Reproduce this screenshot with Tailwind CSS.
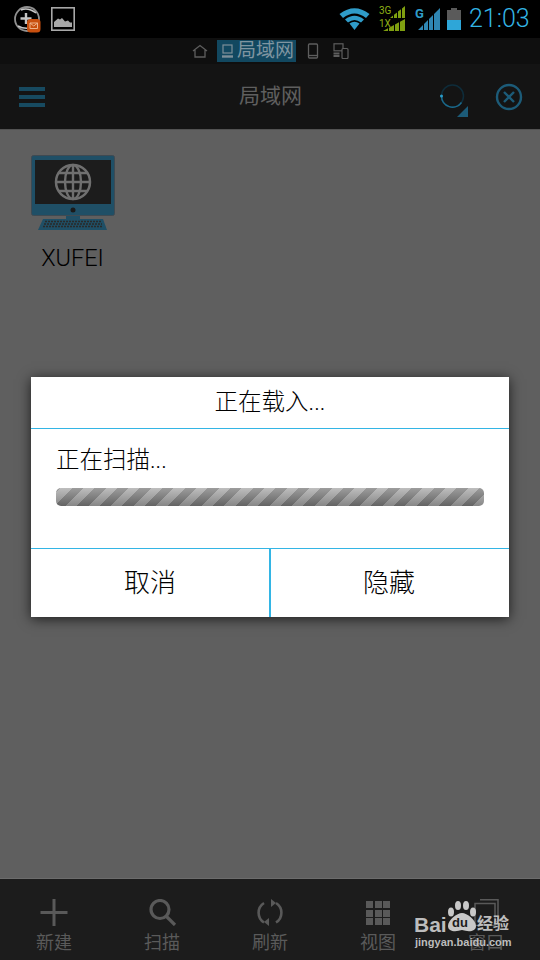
<!DOCTYPE html>
<html><head><meta charset="utf-8">
<script src="https://cdn.jsdelivr.net/npm/@tailwindcss/browser@4"></script></head>
<body class="m-0">
<div class="relative w-[540px] h-[960px] overflow-hidden bg-[#5f5f5f] flex flex-col font-['Roboto','Noto_Sans_CJK_SC',sans-serif]">
  <!-- status bar -->
  <div class="h-[38px] bg-black flex items-center pl-[14px] pr-[10px] shrink-0">
    <svg width="27" height="27" viewBox="0 0 27 27">
      <circle cx="13" cy="13" r="12" fill="none" stroke="#8f8f8f" stroke-width="1.800"/>
      <path d="M4 20Q11 24 20 21M7 4Q14 1 22 7" fill="none" stroke="#c8c8c8" stroke-width="1.500"/>
      <path d="M12 7v11M6.500 12.500h11" stroke="#c4c4c4" stroke-width="2.400"/>
      <rect x="13" y="13" width="13.500" height="13.500" rx="3.500" fill="#c9500f"/>
      <path d="M16 17h7.500v5.500H16zM16 17l3.750 3 3.750-3" fill="none" stroke="#eeb48c" stroke-width="1"/>
    </svg>
    <svg width="24" height="24" viewBox="0 0 24 24" class="ml-[10px]">
      <rect x="0.800" y="0.800" width="22.400" height="22.400" fill="none" stroke="#a8a8a8" stroke-width="1.600"/>
      <path d="M3 20v-5l4-3.500 2 1 2-1.500 3 3.500 3-1 2 2 2 0v4.500z" fill="#a8a8a8"/>
    </svg>
    <div class="flex-1"></div>
    <svg width="31" height="24" viewBox="0 0 31 24" class="mr-[9px]">
      <path d="M0.500 7Q15.500 -4.500 30.500 7L27 11Q15.500 2 4 11z" fill="#2f9cc9"/>
      <path d="M6 12.500Q15.500 5 25 12.500L22 15.500Q15.500 10.500 9 15.500z" fill="#2f9cc9"/>
      <path d="M10.500 16.500Q15.500 13 20.500 16.500L15.500 23z" fill="#2f9cc9"/>
    </svg>
    <div class="relative w-[26px] h-[25px] mt-[-1px] mr-[10px]">
      <svg width="26" height="25" viewBox="0 0 26 25" class="absolute inset-0">
        <path d="M11 12l3-2.400V12zM15 12V8.800l3-2.400V12zM19 12V5.600l3-2.400V12zM23 12V2.400L26 0v12z" fill="#7f9f10"/>
        <path d="M4 25l5-2.700V25zM10 25v-3.200l5-2.700V25zM16 25v-6.500l4-2.200V25zM21 25v-9.300l5-2.700V25z" fill="#7f9f10"/>
      </svg>
      <span class="absolute left-0 top-0 text-[10px] leading-[10px] text-[#8fb015]">3G</span>
      <span class="absolute left-0 top-[13px] text-[10px] leading-[10px] text-[#8fb015]">1X</span>
    </div>
    <div class="relative w-[26px] h-[23px] mr-[6px]">
      <svg width="26" height="23" viewBox="0 0 26 23" class="absolute inset-0">
        <path d="M3 22l5-5v5zM9 22v-6l4-4v10zM14 22V11l4-4v15zM19 22V6l6-6v22z" fill="#2f86b3"/>
      </svg>
      <span class="absolute left-0 top-0 text-[13px] leading-[12px] font-bold text-[#2f9cc9]">G</span>
    </div>
    <div class="w-[14px] h-[22px] flex flex-col items-center mr-[8px]">
      <div class="w-[6px] h-[2px] bg-[#5a5a5a]"></div>
      <div class="w-[14px] h-[10px] bg-[#5a5a5a]"></div>
      <div class="w-[14px] h-[10px] bg-[#2ea6d8]"></div>
    </div>
    <span class="text-[25px] leading-[30px] font-light text-[#33b5e5] font-['Roboto'] w-[61px] whitespace-nowrap">21:03</span>
  </div>
  <!-- location tabs -->
  <div class="h-[26px] bg-[#0f0f0f] flex items-center pl-[192px] shrink-0">
    <svg width="16" height="14" viewBox="0 0 16 14" fill="none" stroke="#5e5e5e" stroke-width="1.300" class="mr-[9px]">
      <path d="M1 7l7-5.500L15 7M3 6v7h10V6"/>
    </svg>
    <div class="h-[22px] w-[79px] bg-[#124860] flex items-center pl-[5px] gap-[4px]">
      <svg width="11" height="14" viewBox="0 0 11 14" fill="none" stroke="#7d8f98" stroke-width="1.200">
        <rect x="1" y="1" width="9" height="8"/><path d="M0 12.500h11" stroke-width="2.400"/>
      </svg>
      <span class="text-[19px] leading-[22px] text-[#7f95a0] whitespace-nowrap">局域网</span>
    </div>
    <svg width="12" height="16" viewBox="0 0 12 16" fill="none" stroke="#5e5e5e" stroke-width="1.300" class="ml-[11px]">
      <rect x="1.500" y="1" width="9" height="14" rx="1"/><path d="M1.500 12.500h9"/>
    </svg>
    <svg width="16" height="16" viewBox="0 0 16 16" fill="none" stroke="#5e5e5e" stroke-width="1.200" class="ml-[14px]">
      <rect x="1" y="0.800" width="9" height="7"/><path d="M0.500 10.500h6M0.500 13h6" stroke-width="2"/><rect x="9" y="5.500" width="6" height="10" rx="1" fill="#0f0f0f"/>
    </svg>
  </div>
  <!-- action bar -->
  <div class="relative h-[65px] bg-[#141414] flex items-center justify-center shrink-0">
    <div class="absolute left-[19px] top-[23px] w-[26px] flex flex-col gap-[4px]">
      <div class="h-[4px] bg-[#174a60]"></div><div class="h-[4px] bg-[#174a60]"></div><div class="h-[4px] bg-[#174a60]"></div>
    </div>
    <span class="text-[21px] leading-[26px] text-[#5f5f5f] mt-[-1px] ml-[1px]">局域网</span>
    <svg width="34" height="36" viewBox="0 0 34 36" class="absolute left-[438px] top-[19px]">
      <circle cx="14.500" cy="13" r="11" fill="none" stroke="#0e2c3a" stroke-width="1.500"/>
      <path d="M3.500 13A11 11 0 0 0 23.500 19.500" fill="none" stroke="#1c6a8c" stroke-width="1.500"/>
      <circle cx="3.500" cy="13" r="1.500" fill="#2a9cc8"/>
      <path d="M30 23v11H19z" fill="#1c5b78"/>
    </svg>
    <svg width="28" height="28" viewBox="0 0 28 28" class="absolute left-[495px] top-[19px]">
      <circle cx="14" cy="14" r="12" fill="none" stroke="#1c5b78" stroke-width="2.400"/>
      <path d="M9 9l10 10M19 9L9 19" stroke="#1c5b78" stroke-width="2.400"/>
    </svg>
  </div>
  <!-- content -->
  <div class="flex-1 pl-[31px] pt-[25px] border-t border-t-[#525252]">
    <div class="w-[84px] flex flex-col items-center">
      <svg width="84" height="76" viewBox="0 0 84 76">
        <rect x="0.500" y="0.500" width="83" height="60" rx="2" fill="#1f4f66" stroke="#3f4a52"/>
        <rect x="4" y="5" width="76" height="44" fill="#1c1c1c"/>
        <circle cx="42" cy="27" r="17" fill="#1c1c1c" stroke="#6f6f6f" stroke-width="2.500"/>
        <ellipse cx="42" cy="27" rx="8" ry="17" fill="none" stroke="#6f6f6f" stroke-width="2.400"/>
        <path d="M42 10v34M25 27h34M28 18h28M28 36h28" stroke="#6f6f6f" stroke-width="2.400"/>
        <circle cx="42" cy="55" r="2.500" fill="#1a1a1a"/>
        <rect x="35" y="61" width="14" height="3" fill="#1f4f66"/>
        <path d="M12 64h60l4 11H7z" fill="#1f4f66"/>
        <path d="M14 66.500h56M13 69h58M12 71.500h60" stroke="#2a2a2a" stroke-width="1.500" stroke-dasharray="2 1"/>
      </svg>
      <span class="mt-[13px] text-[23.500px] leading-[28px] text-black font-['Roboto'] font-light ml-[-1px]">XUFEI</span>
    </div>
  </div>
  <!-- bottom bar -->
  <div class="h-[82px] bg-[#1c1c1c] border-t border-t-[#6c6c6c] grid grid-cols-5 shrink-0 w-[540px]">
    <div class="flex flex-col items-center pt-[20px]">
      <svg width="28" height="27" viewBox="0 0 28 27"><path d="M14 0v27M0.500 13.500h27" stroke="#595959" stroke-width="3"/></svg>
      <span class="text-[18px] leading-[22px] text-[#5a5a5a] mt-[6px]">新建</span>
    </div>
    <div class="flex flex-col items-center pt-[20px]">
      <svg width="30" height="27" viewBox="0 0 30 27" fill="none" stroke="#595959" stroke-width="3.200"><circle cx="13" cy="10.500" r="9"/><path d="M19 17l9 9"/></svg>
      <span class="text-[18px] leading-[22px] text-[#5a5a5a] mt-[6px]">扫描</span>
    </div>
    <div class="flex flex-col items-center pt-[20px]">
      <svg width="28" height="27" viewBox="0 0 28 27" fill="none" stroke="#595959" stroke-width="2.600"><path d="M8 4A11.500 11.500 0 0 0 8 23.500M20 4A11.500 11.500 0 0 1 20 23.500"/><path d="M15 0l5 4-5 4zM13 19l-5 4 5 4z" fill="#595959" stroke="none"/></svg>
      <span class="text-[18px] leading-[22px] text-[#5a5a5a] mt-[6px]">刷新</span>
    </div>
    <div class="flex flex-col items-center pt-[20px]">
      <div class="w-[24px] h-[24px] mt-[2px] mb-[1px] grid grid-cols-3 grid-rows-3 gap-[1.500px]">
        <div class="bg-[#595959]"></div><div class="bg-[#595959]"></div><div class="bg-[#595959]"></div>
        <div class="bg-[#595959]"></div><div class="bg-[#595959]"></div><div class="bg-[#595959]"></div>
        <div class="bg-[#595959]"></div><div class="bg-[#595959]"></div><div class="bg-[#595959]"></div>
      </div>
      <span class="text-[18px] leading-[22px] text-[#5a5a5a] mt-[6px]">视图</span>
    </div>
    <div class="flex flex-col items-center pt-[20px]">
      <svg width="28" height="27" viewBox="0 0 28 27" fill="none" stroke="#595959" stroke-width="1.500"><path d="M8 0.800h18v22h-3"/><rect x="3" y="4.500" width="20" height="22"/></svg>
      <span class="text-[18px] leading-[22px] text-[#5a5a5a] mt-[6px]">窗口</span>
    </div>
  </div>
  <!-- dialog -->
  <div class="absolute left-[31px] top-[377px] w-[478px] h-[240px] bg-white shadow-[0_2px_12px_rgba(0,0,0,0.7)] flex flex-col">
    <div class="h-[52px] border-b border-b-[#33b5e5] flex items-center justify-center shrink-0">
      <span class="text-[23.500px] leading-[30px] text-black font-light mt-[-2px]">正在载入...</span>
    </div>
    <div class="h-[120px] border-b border-b-[#33b5e5] px-[25px] pt-[16px] shrink-0">
      <div class="text-[23.500px] leading-[30px] text-black font-light">正在扫描...</div>
      <div class="mt-[13px] h-[18px] rounded-[5px] bg-[linear-gradient(180deg,rgba(255,255,255,0.25),rgba(0,0,0,0.2)),repeating-linear-gradient(-45deg,#a8a8a8_0px,#a8a8a8_8px,#7c7c7c_8px,#7c7c7c_16px)]"></div>
    </div>
    <div class="flex-1 flex">
      <div class="w-[240px] border-r-2 border-r-[#33b5e5] flex items-center justify-center text-[26px] text-black font-light">取消</div>
      <div class="flex-1 flex items-center justify-center text-[26px] text-black font-light pr-[2px]">隐藏</div>
    </div>
  </div>
  <!-- watermark -->
  <div class="absolute left-[414px] top-[900px] w-[126px] h-[50px]">
    <span class="absolute left-0 top-[12px] text-[21px] leading-[26px] font-bold text-[#bdbdbd] font-['Liberation_Sans']">Bai</span>
    <svg width="30" height="32" viewBox="0 0 30 32" class="absolute left-[33px] top-[1px]">
      <ellipse cx="4" cy="11" rx="3" ry="4.500" fill="#c8c8c8"/>
      <ellipse cx="11" cy="4.500" rx="3" ry="4.500" fill="#c8c8c8"/>
      <ellipse cx="19" cy="4.500" rx="3" ry="4.500" fill="#c8c8c8"/>
      <ellipse cx="26" cy="11" rx="3" ry="4.500" fill="#c8c8c8"/>
      <path d="M15 12C10 12 1 19 1 25c0 6 8 6 14 4 6 2 14 2 14-4C29 19 20 12 15 12z" fill="#c8c8c8"/>
    </svg>
    <span class="absolute left-[38px] top-[15px] text-[13px] leading-[16px] font-bold text-[#1c1c1c] font-['Liberation_Sans']">du</span>
    <span class="absolute left-[63px] top-[14px] text-[16px] leading-[20px] font-bold text-[#bdbdbd] whitespace-nowrap">经验</span>
    <span class="absolute left-[1px] top-[35px] text-[11px] leading-[14px] font-bold text-[#bdbdbd] whitespace-nowrap font-['Liberation_Sans']">jingyan.baidu.com</span>
  </div>
</div>
</body></html>
